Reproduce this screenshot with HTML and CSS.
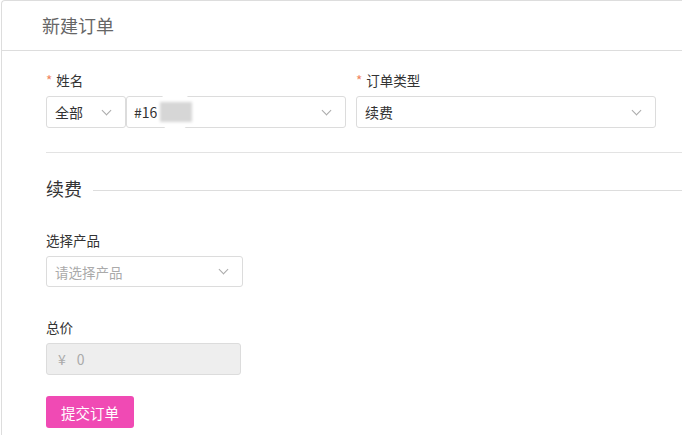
FILE: index.html
```html
<!DOCTYPE html>
<html lang="zh">
<head>
<meta charset="utf-8">
<link rel="stylesheet" href="styles.css">
</head>
<body>
<div class="card">
  <div class="card-header">新建订单</div>
  <div class="card-body">
    <div class="row">
      <div class="field">
        <div class="label"><span class="req">*</span>姓名</div>
        <div class="group">
          <div class="select s-scope"><span class="val">全部</span><span class="chev"></span></div>
          <div class="select s-name"><span class="val">#16</span><span class="blur"></span><span class="chev"></span></div>
        </div>
      </div>
      <div class="field">
        <div class="label"><span class="req">*</span>订单类型</div>
        <div class="select s-type"><span class="val">续费</span><span class="chev"></span></div>
      </div>
    </div>
    <div class="divider"></div>
    <div class="section-title"><span>续费</span><span class="rule"></span></div>
    <div class="field f-product">
      <div class="label">选择产品</div>
      <div class="select s-product"><span class="val ph">请选择产品</span><span class="chev"></span></div>
    </div>
    <div class="field f-price">
      <div class="label">总价</div>
      <div class="input-disabled"><span class="yen">¥</span><span>0</span></div>
    </div>
    <button class="btn">提交订单</button>
  </div>
</div>
</body>
</html>
```
FILE: styles.css
```css
html, body {
  margin: 0;
  padding: 0;
  background: #fff;
  font-family: "Noto Sans CJK SC", "Noto Sans", "Liberation Sans", sans-serif;
  color: #333;
  font-size: 13px;
}
.card {
  margin-left: 1px;
  border: 1px solid #ddd;
  border-right: none;
  border-bottom: none;
  border-top-left-radius: 4px;
  height: 440px;
}
.card-header {
  height: 49px;
  line-height: 49px;
  padding-left: 40px;
  font-size: 18px;
  color: #666;
  border-bottom: 1px solid #ddd;
}
.card-body {
  padding: 19px 0 0 44px;
}
.row {
  display: grid;
  grid-template-columns: 300px 300px;
  column-gap: 10px;
}
.label {
  height: 20px;
  line-height: 20px;
  margin-bottom: 6px;
  font-size: 13.5px;
  color: #333;
}
.req {
  color: #f0845c;
  margin-right: 4px;
}
.group {
  display: flex;
}
.select {
  position: relative;
  box-sizing: border-box;
  height: 32px;
  border: 1px solid #dcdcdc;
  border-radius: 3px;
  display: flex;
  align-items: center;
  padding-left: 8px;
  background: #fff;
  font-size: 14px;
}
.s-scope { width: 80px; }
.s-name { width: 220px; padding-left: 7px; }
.s-type { width: 300px; }
.s-product { width: 197px; height: 31px; font-size: 13.5px; }
.val { flex: 1; color: #333; }
.val.ph { color: #aaa; }
.chev {
  width: 6px;
  height: 6px;
  border-right: 1px solid #aaa;
  border-bottom: 1px solid #aaa;
  transform: rotate(45deg);
  margin: 0 15px 4px 0;
}
.blur {
  position: absolute;
  left: 30px;
  top: -6px;
  width: 36px;
  height: 40px;
  border-radius: 50%;
  background: #fff;
}
.blur::after {
  content: "";
  position: absolute;
  left: 3px;
  top: 11px;
  width: 32px;
  height: 20px;
  background: #d6d6d6;
  filter: blur(1.5px);
}
.divider {
  height: 1px;
  background: #e3e3e3;
  margin-top: 24px;
}
.section-title {
  display: flex;
  align-items: center;
  margin-top: 23px;
  height: 24px;
  font-size: 18px;
  color: #333;
}
.section-title .rule {
  flex: 1;
  height: 1px;
  background: #ddd;
  margin-left: 11px;
  margin-top: 4px;
}
.f-product { margin-top: 30px; }
.f-price { margin-top: 30px; }
.input-disabled {
  box-sizing: border-box;
  width: 195px;
  height: 32px;
  border: 1px solid #dcdcdc;
  border-radius: 3px;
  background: #eeeeee;
  display: flex;
  align-items: center;
  padding-left: 11px;
  color: #aaa;
  font-size: 14px;
}
.yen { margin-right: 11px; }
.btn {
  display: block;
  margin-top: 21px;
  width: 88px;
  height: 32px;
  border: none;
  border-radius: 3px;
  background: #f04ab4;
  color: #fff;
  font-family: inherit;
  font-size: 14.5px;
  padding: 0;
}
```
